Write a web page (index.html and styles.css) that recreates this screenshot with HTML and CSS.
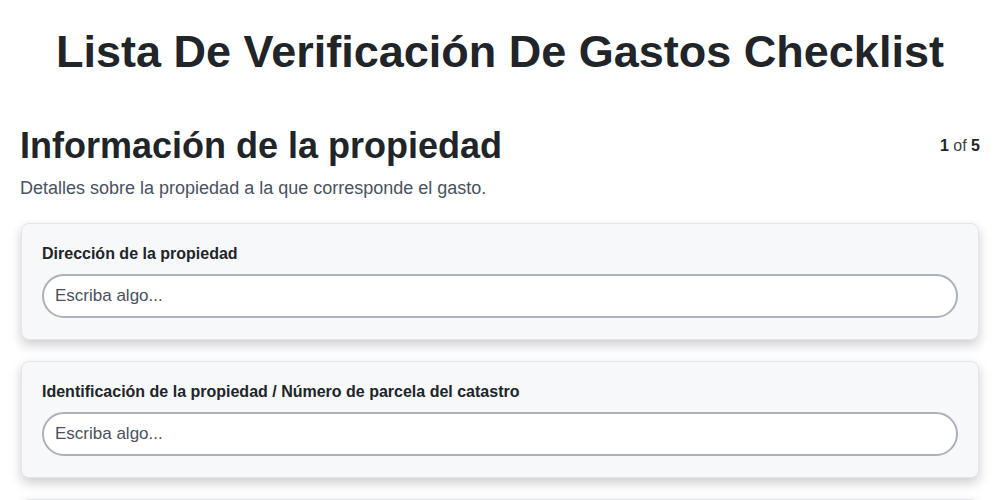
FILE: index.html
```html
<!DOCTYPE html>
<html lang="es">
<head>
<meta charset="utf-8">
<title>Lista De Verificación De Gastos Checklist</title>
<link rel="stylesheet" href="styles.css">
</head>
<body>
<main class="page">
  <h1 class="title">Lista De Verificación De Gastos Checklist</h1>
  <section class="section">
    <header class="section-head">
      <div>
        <h2 class="section-title">Información de la propiedad</h2>
        <p class="section-desc">Detalles sobre la propiedad a la que corresponde el gasto.</p>
      </div>
      <div class="pager"><b>1</b> of <b>5</b></div>
    </header>
    <div class="cards">
      <div class="card">
        <label class="label">Dirección de la propiedad</label>
        <input class="input" type="text" placeholder="Escriba algo...">
      </div>
      <div class="card">
        <label class="label">Identificación de la propiedad / Número de parcela del catastro</label>
        <input class="input" type="text" placeholder="Escriba algo...">
      </div>
      <div class="card">
        <label class="label">Propietario de la propiedad</label>
        <input class="input" type="text" placeholder="Escriba algo...">
      </div>
    </div>
  </section>
</main>
</body>
</html>
```
FILE: styles.css
```css
* { box-sizing: border-box; }
html, body { margin: 0; padding: 0; background: #fff; }
body {
  font-family: "Liberation Sans", Arial, sans-serif;
  color: #1f2328;
}
.page { padding: 0 20px; }
.title {
  margin: 0;
  padding-top: 26px;
  font-size: 45px;
  line-height: 52px;
  font-weight: 700;
  text-align: center;
  color: #212529;
}
.section { margin-top: 47px; }
.section-head {
  display: flex;
  justify-content: space-between;
  align-items: flex-start;
}
.section-title {
  margin: 0;
  font-size: 36px;
  line-height: 42px;
  font-weight: 700;
  color: #212529;
}
.section-desc {
  margin: 9px 0 0;
  font-size: 18px;
  line-height: 24px;
  color: #4a5160;
}
.pager {
  font-size: 16px;
  line-height: 20px;
  padding-top: 11px;
  color: #3a3f46;
}
.pager b { color: #212529; }
.cards {
  margin-top: 23px;
  display: flex;
  flex-direction: column;
  gap: 21px;
}
.card {
  margin: 0 1px;
  background: #f7f8fa;
  border: 1px solid #e3e5ea;
  border-radius: 8px;
  box-shadow: 0 5px 12px rgba(0, 0, 0, 0.2);
  padding: 19px 20px 21px;
  display: flex;
  flex-direction: column;
  gap: 9px;
}
.label {
  font-size: 16px;
  line-height: 22px;
  font-weight: 700;
  color: #212529;
}
.input {
  display: block;
  width: 100%;
  height: 44px;
  border: 2px solid #aab1b9;
  border-radius: 22px;
  background: #fff;
  padding: 0 11px;
  font-family: "Liberation Sans", Arial, sans-serif;
  font-size: 17px;
  color: #212529;
  outline: none;
}
.input::placeholder { color: #4a5160; opacity: 1; }
```
